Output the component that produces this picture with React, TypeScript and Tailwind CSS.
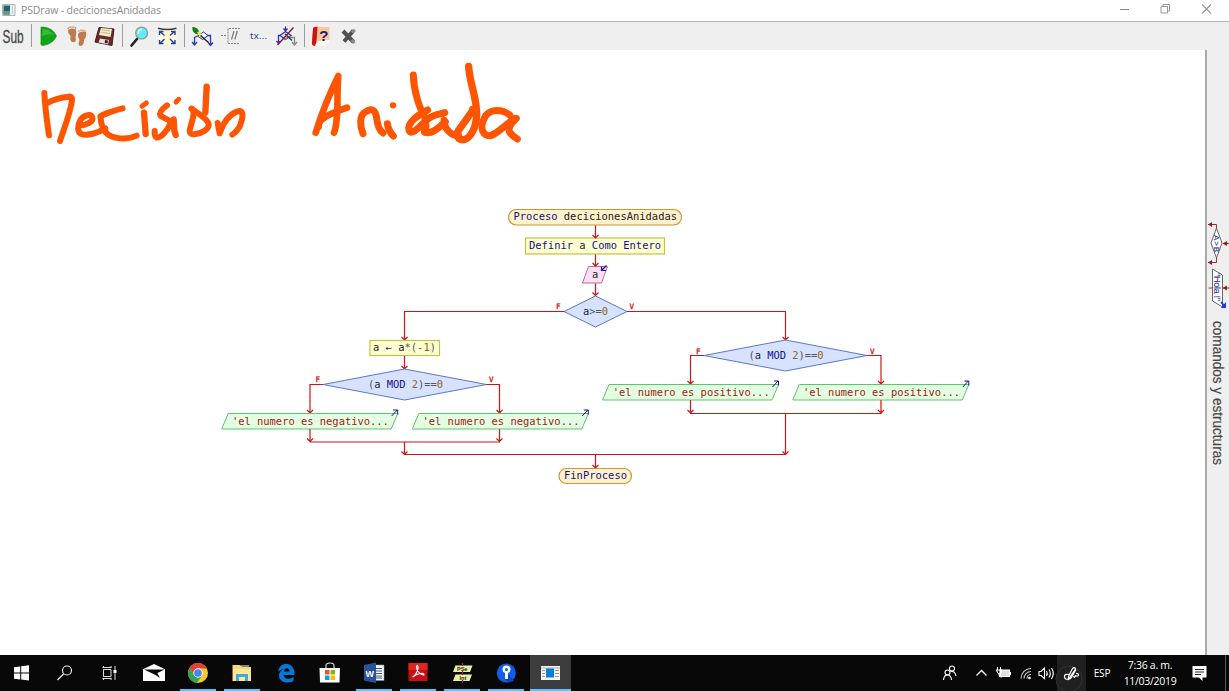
import React from "react";

type Part = [string, string];
const INK = "#11118a";
const BLK = "#222222";
const NUM = "#946520";
const OP = "#555555";
const STR = "#a81414";
const RED = "#d01414";

function Code({ x, y, w, parts }: { x: number; y: number; w: number; parts: Part[] }) {
  return (
    <text x={x} y={y} textLength={w} fontSize="10.45" xmlSpace="preserve" className="font-['DejaVu_Sans_Mono',monospace] whitespace-pre">
      {parts.map(([t, c], i) => (
        <tspan key={i} fill={c}>{t}</tspan>
      ))}
    </text>
  );
}

function Arrow({ x, y1, y2 }: { x: number; y1: number; y2: number }) {
  return <path d={`M${x} ${y1}V${y2}M${x - 3} ${y2 - 3}L${x} ${y2}L${x + 3} ${y2 - 3}`} stroke={RED} fill="none" strokeWidth="1.2" />;
}

function Output({ x, y, text }: { x: number; y: number; text: string }) {
  return (
    <g>
      <path d={`M${x + 6.5} ${y}H${x + 176}L${x + 169.5} ${y + 15.5}H${x}Z`} fill="#e3ffe3" stroke="#5fc46b" />
      <path d={`M${x + 170} ${y + 2.5}L${x + 175.5} ${y - 3.5}M${x + 171.500} ${y - 3.5}H${x + 176}V${y + 1}`} fill="none" stroke={INK} strokeWidth="1" />
      <Code x={x + 10.2} y={y + 11.2} w={157} parts={[[text, STR]]} />
    </g>
  );
}

function Flag({ x, y, t }: { x: number; y: number; t: string }) {
  return <text x={x} y={y} fontSize="7.5" fill={RED} stroke={RED} strokeWidth=".3" className="font-['DejaVu_Sans_Mono',monospace]">{t}</text>;
}

function Flowchart() {
  return (
    <g>
      <rect x="508.5" y="209.5" width="173" height="15.5" rx="7.75" fill="#fff1cc" stroke="#c9963a" strokeWidth="1.2" />
      <Code x={513.5} y={220.300} w={163.5} parts={[["Proceso", INK], [" decicionesAnidadas", BLK]]} />
      <rect x="525.5" y="238" width="139" height="16" fill="#ffffd2" stroke="#c2c244" strokeWidth="1.2" />
      <Code x={529} y={249.200} w={132} parts={[["Definir", INK], [" a ", BLK], ["Como Entero", INK]]} />
      <path d="M588.5 266.5H607.5L601.5 283H582.5Z" fill="#ffe0f2" stroke="#c4649a" />
      <path d="M606.5 265.5L601.5 270.5M601.5 266.5V270.5H606" fill="none" stroke={INK} strokeWidth="1.2" />
      <Code x={592} y={278} w={6.3} parts={[["a", BLK]]} />
      <path d="M564 311.5L595.5 296L627 311.5L595.5 327Z" fill="#d6e2ff" stroke="#5a78cc" />
      <Code x={583} y={314.5} w={25} parts={[["a", BLK], [">=", OP], ["0", NUM]]} />
      <Flag x={556} y={308.5} t="F" />
      <Flag x={629.500} y={308.5} t="V" />
      <Arrow x={595.5} y1={225.5} y2={238} />
      <Arrow x={595.5} y1={254.5} y2={266} />
      <Arrow x={595.5} y1={283.5} y2={295.5} />
      <path d="M564 311.5H404.5M627 311.5H785.5" stroke={RED} strokeWidth="1.2" fill="none" />
      <Arrow x={404.5} y1={311} y2={340} />
      <Arrow x={785.5} y1={311} y2={340} />

      <rect x="370" y="340.5" width="69.5" height="15" fill="#ffffd2" stroke="#c2c244" strokeWidth="1.2" />
      <Code x={373} y={351} w={63} parts={[["a ", BLK], ["←", INK], [" a", BLK], ["*(-", OP], ["1", NUM], [")", OP]]} />
      <Arrow x={404.5} y1={356} y2={369} />
      <path d="M323 384.5L404.5 369L486.5 384.5L404.5 400Z" fill="#d6e2ff" stroke="#5a78cc" />
      <Code x={368} y={388} w={75} parts={[["(", OP], ["a ", BLK], ["MOD", INK], [" 2", NUM], [")==", OP], ["0", NUM]]} />
      <Flag x={315.500} y={382} t="F" />
      <Flag x={489} y={382} t="V" />
      <path d="M323 384.5H310M486 384.5H499.5" stroke={RED} strokeWidth="1.2" fill="none" />
      <Arrow x={310} y1={384} y2={413} />
      <Arrow x={499.5} y1={384} y2={413} />
      <Output x={221.7} y={413.5} text="'el numero es negativo..." />
      <Output x={412.3} y={413.5} text="'el numero es negativo..." />
      <Arrow x={310} y1={429} y2={441.5} />
      <Arrow x={499.5} y1={429} y2={441.5} />
      <path d="M310 442H500" stroke={RED} strokeWidth="1.2" />
      <Arrow x={404.5} y1={442} y2={454.5} />

      <path d="M704 355.5L785.5 340L867 355.5L785.5 371Z" fill="#d6e2ff" stroke="#5a78cc" />
      <Code x={748.5} y={359} w={75} parts={[["(", OP], ["a ", BLK], ["MOD", INK], [" 2", NUM], [")==", OP], ["0", NUM]]} />
      <Flag x={696} y={353.5} t="F" />
      <Flag x={870} y={353.5} t="V" />
      <path d="M704 355.5H690.5M867 355.5H881" stroke={RED} strokeWidth="1.2" fill="none" />
      <Arrow x={690.5} y1={355} y2={384} />
      <Arrow x={881} y1={355} y2={384} />
      <Output x={602.5} y={384.5} text="'el numero es positivo..." />
      <Output x={792.8} y={384.5} text="'el numero es positivo..." />
      <Arrow x={690.5} y1={400} y2={413} />
      <Arrow x={881} y1={400} y2={413} />
      <path d="M690 413.5H881.5" stroke={RED} strokeWidth="1.2" />
      <Arrow x={785.5} y1={413} y2={454.5} />
      <path d="M404 454.5H786" stroke={RED} strokeWidth="1.2" />
      <Arrow x={595.5} y1={454} y2={468} />
      <rect x="559" y="468.5" width="72.5" height="15" rx="7.5" fill="#fff1cc" stroke="#c9963a" strokeWidth="1.2" />
      <Code x={564} y={479.3} w={63} parts={[["FinProceso", INK]]} />
    </g>
  );
}

function Handwriting() {
  return (
    <g fill="none" stroke="#ff5500" strokeLinecap="round" strokeLinejoin="round" strokeWidth="18">
      <g transform="translate(30 55) scale(.33333)">
        <path d="M43 114C45 155 51 200 57 241" />
        <path d="M54 143C70 134 94 127 116 125Q125 123 126 131C126 160 102 220 90 258" />
        <path d="M150 211C166 211 191 201 187 188C184 176 163 178 152 194C141 211 142 232 154 237C172 243 204 235 226 220" />
        <path d="M278 160C256 165 221 177 211 184C213 203 216 221 227 232C246 254 293 255 320 242" />
        <path d="M342 173L347 237" strokeWidth="19" />
        <path d="M336 154L349 144" strokeWidth="15" />
        <path d="M411 151C399 160 386 172 391 181C400 193 424 190 420 207C415 224 391 251 379 247Q373 245 374 228" />
        <path d="M431 193L433 226L437 240" strokeWidth="19" />
        <path d="M438 141L446 133" strokeWidth="15" />
        <path d="M530 95L526 173" strokeWidth="19" />
        <path d="M484 161C492 165 492 172 489 188L480 222Q476 239 493 238C516 236 538 222 536 207C532 190 504 177 486 161" />
        <path d="M563 204L569 235C578 205 598 178 622 169C640 165 640 182 634 200C630 219 617 232 607 239" />
      </g>
      <g transform="translate(290 55) scale(.33333)">
        <path d="M77 233C94 178 121 112 145 63C139 116 148 198 132 233M86 215C82 190 126 174 171 158" strokeWidth="20" />
        <path d="M219 236C209 212 210 184 221 175C242 158 254 161 259 184Q264 225 279 234" strokeWidth="21" />
        <path d="M292 206Q296 230 310 243" strokeWidth="21" />
        <path d="M309 151H309.1" strokeWidth="19" />
        <path d="M370 60C371 106 387 156 403 184Q412 215 404 232" strokeWidth="21" />
        <path d="M413 165C384 179 350 204 357 226C365 247 398 203 415 191C433 178 450 178 464 173M410 190C400 215 397 232 414 233C436 233 453 211 466 200M462 196C463 228 493 246 505 239" strokeWidth="21" />
        <path d="M536 34C538 83 562 130 560 181C558 219 542 249 522 254C503 256 496 239 506 226C519 205 548 171 548 163" strokeWidth="22" />
        <path d="M659 180C637 162 603 162 587 182C575 203 570 227 587 239C605 252 632 222 651 208C663 199 671 188 679 190C662 206 651 220 660 233Q668 244 682 252" strokeWidth="21" />
      </g>
    </g>
  );
}

function Slot({ x, y, w, h, children }: { x: number; y: number; w: number; h: number; children?: React.ReactNode }) {
  return <svg className="block shrink-0 overflow-visible" width={w} height={h} viewBox={`${x} ${y} ${w} ${h}`} fill="none">{children}</svg>;
}

function Separator() {
  return <div className="mt-[2px] h-[23px] w-px shrink-0 bg-[#9c9c9c]" />;
}

function Toolbar() {
  return (
    <div className="flex h-[29px] w-full shrink-0 border-t border-[#b9b9b9] bg-[#efefef]">
      <Slot x={0} y={22} w={31} h={28}>
        <text transform="translate(2.500 43) scale(.66 1)" fontSize="18" fill="#484848" stroke="#484848" strokeWidth=".3" className="font-['Liberation_Sans',sans-serif]">Sub</text>
      </Slot>
      <Separator />
      <Slot x={32} y={22} w={90} h={28}>
        <path d="M41 28Q40 27 43 27Q53 28 56.500 36Q53 44 43 45.500Q40 45.500 41 42Z" fill="#0fa51b" stroke="#0d8b15" strokeWidth=".7" />
        <path d="M43 29Q49 29 54 35Q48 33 42 36Z" fill="#3dbb38" />
        <g fill="#bd7b50">
          <path d="M68 30Q70 27.500 75.500 29Q77 32 75.500 37Q77 43 73 42Q69.500 42 70.500 36Q67.500 33 68 30Z" />
          <path d="M78 34Q80 30.500 86 32Q87 36 84 40Q84 46 80 46Q77.500 45 79.500 40Q77.500 37 78 34Z" />
          <path d="M67.700 28.200h1.200M69.500 27.300h1.200M71.500 27h1M73.500 27.200h1M75 28h1M78.500 31h1M80.500 30.300h1M82.500 30.200h1M84.500 30.800h1" stroke="#bd7b50" strokeWidth="1.500" />
        </g>
        <path d="M99 27.500L114 29L112 45.500L95 42Z" fill="#6b2926" stroke="#401f1f" />
        <path d="M101 28L112 29L110.500 37L99 35Z" fill="#f7f0c8" />
        <path d="M102 30L110.500 31M101.500 32.500L110 33.500" stroke="#a89c79" strokeWidth=".7" />
        <path d="M100 38.500L109 40L108 44.500L98.500 42.500Z" fill="#e4e1e1" />
        <path d="M105 40L108 40.500L107.500 43.500L104.700 43Z" fill="#422" />
      </Slot>
      <Separator />
      <Slot x={123} y={22} w={61} h={28}>
        <path d="M137 39L131.500 45.500" stroke="#202525" strokeWidth="2.700" strokeLinecap="round" />
        <circle cx="141.600" cy="33" r="5.900" fill="#62edf4" stroke="#8a9da1" strokeWidth="1.400" />
        <path d="M138.500 34Q137.500 29.800 142 29.500" stroke="#d9ffff" strokeWidth="1.800" />
        <path d="M158 28Q167.500 31 176.500 28V44Q167 46 158 44Z" fill="#fffbd0" />
        <path d="M158 28.300Q167.500 30.700 176.500 28.300" stroke="#3a3a2e" strokeWidth="1.500" />
        <path d="M164.500 35.500L160 31.500M159.500 35V31.500H163.500M170 35.500L174.500 31.500M171 31.500H175V35M164.500 39L160 43.500M159.500 40V43.500H163.500M170 39L174.500 43.500M171 43.500H175V40" stroke="#2339b5" strokeWidth="1.400" />
      </Slot>
      <Separator />
      <Slot x={185} y={22} w={119} h={28}>
        <path d="M194.500 37V44M192 42L194.500 45L197 42M194.500 37.500L197.500 36M206 35.500H210.500V45M208 42.500L210.500 45.500L213 42.500" stroke="#2a35b0" strokeWidth="1.300" />
        <path d="M197.500 36L203.500 32L208 35.500L202.500 39.500Z" fill="#f2f2f8" stroke="#2a35b0" />
        <path d="M192.300 27Q197 27 199 31L198 34.500Q192 33.500 192.300 27Z" fill="#128018" />
        <path d="M197 32.500L199.500 31L202 34.500L200 36.500Z" fill="#eee34a" />
        <path d="M200.500 35.500L208.500 42.500" stroke="#222" strokeWidth="1.500" />
        <path d="M221 35.500H227M240 28.500H228V43.500H240" stroke="#808080" strokeDasharray="2 1" />
        <path d="M231.500 39.500L234 31M234.800 39.500L237.300 31" stroke="#777" strokeWidth="1.200" />
        <text x="250" y="39" fontSize="9.500" textLength="17" fill="#36369c" className="font-['Noto_Sans',sans-serif]">tx...</text>
        <path d="M285.500 26.500V30M283.500 28.500L285.500 31L287.500 28.500M280 35.500L285.500 31.500L291 35.500L285.500 39.500ZM280 35.500H278.500V43M276.500 41L278.500 43.500L280.500 41" stroke="#2a35b0" strokeWidth="1.300" />
        <path d="M285 39.500L288 37L292 37.500H294.500V44.500M292 42L294.500 45L297 42" stroke="#858585" strokeWidth="1.300" />
        <path d="M285 34L292 40.500" stroke="#333" strokeWidth="1.400" />
        <path d="M277.500 45L293.500 27.500" stroke="#8c1c26" strokeWidth="1.400" />
      </Slot>
      <Separator />
      <Slot x={305} y={22} w={60} h={28}>
        <path d="M313 28Q315 26 319 27V41L315 46Q311 46 312 41Z" fill="#c51714" />
        <path d="M317 41L329.500 40V42.500L326 45.500H315Z" fill="#fffaf0" />
        <path d="M317.500 27H329.500V40Q324 39 316.500 42Z" fill="#ffc596" />
        <text transform="translate(319 40.500)" fontSize="15.500" fontWeight="bold" fill="#17218b" className="font-['Liberation_Sans',sans-serif]">?</text>
        <path d="M343 31L353.500 42M353.500 30.500L344 41.500" stroke="#505050" strokeWidth="4" />
        <path d="M351.500 40L354.500 43M352 32.500L355 29.800" stroke="#8c8c8c" strokeWidth="3" />
      </Slot>
    </div>
  );
}

function SidePanel() {
  return (
    <aside className="flex w-[24px] shrink-0 flex-col border-l-2 border-[#a9a9a9] bg-[#efefef] pl-px">
      <Slot x={1208} y={50} w={21} h={271}>
        <path d="M1216.500 228L1222 243L1216.500 258L1211 243Z" fill="#fff" stroke="#666" />
        <path d="M1216.500 228V224.500H1208M1216.500 258V262.500H1208M1229 243.500H1223M1208.500 288H1212M1222.500 288H1229" stroke="#943030" />
        <path d="M1208 224.500L1212 222V227ZM1208 262.500L1212 260V265ZM1222.500 243.500L1227 241V246ZM1222.500 288L1227 285.500V290.500Z" fill="#a31515" />
        <path d="M1212.500 269L1222.500 275V307L1212.500 301Z" fill="#fff" stroke="#666" />
        <g fill="#3737a4" stroke="#3737a4" strokeWidth=".15" className="font-['Liberation_Sans',sans-serif]">
          <text transform="translate(1213.800 235) rotate(90)" fontSize="8" textLength="17">A&gt;B</text>
          <text transform="translate(1214.200 273) rotate(90)" fontSize="9.500" textLength="28">"Hola !"</text>
        </g>
        <path d="M1221 302L1224 305.500" stroke="#1d32f0" strokeWidth="1.800" /><path d="M1221 308H1226V302Z" fill="#1d32f0" />
      </Slot>
      <Slot x={1208} y={321} w={21} h={145}>
        <text transform="translate(1213.300 321) rotate(90)" fontSize="14" textLength="144" lengthAdjust="spacingAndGlyphs" fill="#464646" stroke="#464646" strokeWidth=".2" className="font-['Liberation_Sans',sans-serif]">comandos y estructuras</text>
      </Slot>
    </aside>
  );
}

function TaskSlot({ x, active, running, children }: { x: number; active?: boolean; running?: boolean; children: React.ReactNode }) {
  return (
    <div className={`flex h-9 w-11 shrink-0 flex-col items-center ${active ? "bg-[linear-gradient(90deg,transparent_2px,#3d3d3d_2px,#3d3d3d_43px,transparent_43px)]" : ""}`}>
      <Slot x={x} y={655} w={44} h={34}>{children}</Slot>
      {running && <div className={`h-[2px] bg-[#76b9ed] ${active ? "w-[41px]" : "w-9"}`} />}
    </div>
  );
}

function Taskbar() {
  return (
    <footer className="flex h-9 shrink-0 overflow-hidden bg-[#080808] font-['Open_Sans',sans-serif] text-white">
      <TaskSlot x={0}>
        <path d="M14 667.300L20.200 666.500V672.500H14ZM21.200 666.300L29 665.300V672.500H21.200ZM14 673.500H20.200V679.500L14 678.700ZM21.200 673.500H29V680.600L21.200 679.600Z" fill="#fff" />
      </TaskSlot>
      <TaskSlot x={44}>
        <circle cx="67" cy="670.500" r="4.500" stroke="#eee" strokeWidth="1.200" /><path d="M63.500 674L57.500 680" stroke="#eee" strokeWidth="1.200" />
      </TaskSlot>
      <TaskSlot x={87}>
        <path d="M102.500 669.500H110V676.500H102.500ZM102.500 666V668M110 666V668M102.500 680V678M110 680V678M101.500 667.500H110.500M101.500 678.500H110.500M114 666V680" stroke="#ddd" />
        <path d="M112.500 670H115.500V673H112.500Z" fill="#fff" />
      </TaskSlot>
      <TaskSlot x={132}>
        <path d="M143 669.300L154 664L165 669.300V681H143Z" fill="#fff" /><path d="M144 669.500H164.500L154.500 674.500Z" fill="#080808" /><path d="M154 674L160 678L157 672.500Z" fill="#080808" />
      </TaskSlot>
      <TaskSlot x={176} running>
        <circle cx="198" cy="673" r="10" fill="#f7c72e" />
        <path d="M189.300 668A10 10 0 0 1 207 668.500L198 668.500L194 675Z" fill="#db4437" />
        <path d="M189.300 668A10 10 0 0 0 197 683L202 675L194 675Z" fill="#33a455" />
        <circle cx="198" cy="673" r="4.700" fill="#fff" /><circle cx="198" cy="673" r="3.800" fill="#4285f4" />
      </TaskSlot>
      <TaskSlot x={220} running>
        <path d="M232.500 665H240L242 667H251V681H232.500Z" fill="#f8d775" /><path d="M233 669H251V681H233Z" fill="#ffe69b" />
        <path d="M236 681V674H248V681H245V677H239V681Z" fill="#38afe0" /><path d="M241 666H249" stroke="#fff" />
      </TaskSlot>
      <TaskSlot x={264}>
        <path d="M278 671.500C279 666 283 663.500 287 664C292 664.500 295 669 294.500 675H283.500C284 679 289 680 293.500 677V681C286 684.500 279 681.500 279 675.500C279 672 281.500 670 284 669C281 669.300 279.300 670.500 278 671.500ZM284 671.500H289.500C289.500 667 284.500 667.500 284 671.500Z" fill="#0878d7" fillRule="evenodd" />
      </TaskSlot>
      <TaskSlot x={308}>
        <path d="M326 669V665.500Q326 663 330 663Q334 663 334 665.500V669" stroke="#ddd" strokeWidth="1.200" />
        <path d="M319.500 668H340L339.500 682.500H320Z" fill="#fff" />
        <path d="M325 670H329.500V674.500H325Z" fill="#f25022" /><path d="M330.500 670H335V674.500H330.500Z" fill="#7fba00" /><path d="M325 675.500H329.500V680H325Z" fill="#00a4ef" /><path d="M330.500 675.500H335V680H330.500Z" fill="#ffb900" />
      </TaskSlot>
      <TaskSlot x={352} running>
        <path d="M373 665H384V680.500H373Z" fill="#fff" stroke="#6d8db9" strokeWidth=".6" />
        <path d="M376 668.500H382M376 671H382M376 673.500H382M376 676H382M376 678H382" stroke="#295397" />
        <path d="M364 665L376 662.500V683L364 680.500Z" fill="#295397" />
        <text x="365.500" y="676.500" fontSize="9.500" fontWeight="bold" fill="#fff" textLength="8.500" lengthAdjust="spacingAndGlyphs" className="font-['Liberation_Sans',sans-serif]">W</text>
      </TaskSlot>
      <TaskSlot x={396} running>
        <path d="M408.500 663H427.500V681H408.500Z" fill="#c80f16" /><path d="M408.500 663H427.500V670H408.500Z" fill="#dd2524" />
        <path d="M412.500 677C416 675 418.500 670 418 666.500Q417 664 416.500 667C417 671 420 674 423 675Q425 675 423 673.500C419 673 416 674.500 412.500 677" stroke="#fff" strokeWidth="1.100" />
      </TaskSlot>
      <TaskSlot x={440} running>
        <path d="M455.500 665.500H472.500L470 672H453ZM455.500 674.500H472L469.500 681H453Z" fill="#eaf0a6" />
        <path d="M462.500 663V666M462.500 671V675M462.500 680V683" stroke="#b71b32" strokeWidth="1.200" />
        <g fill="#252525" fontSize="5.500" fontWeight="bold" className="font-['Liberation_Sans',sans-serif]"><text x="457" y="671">PSe</text><text x="459.500" y="680">Int</text></g>
      </TaskSlot>
      <TaskSlot x={484} running>
        <circle cx="506.300" cy="673" r="9.500" fill="#135ee9" /><path d="M508 674L514 681L508 682.500L505 679Z" fill="#0a48ba" /><path d="M505 673Q502.500 672 502.500 669.500Q502.500 665.500 506.500 665.500Q510.500 665.500 510.500 669.500Q510.500 672 508 673V679H505Z" fill="#fff" /><circle cx="506.500" cy="669.500" r="1.500" fill="#135ee9" />
      </TaskSlot>
      <TaskSlot x={528} active running>
        <path d="M541 666H560V680H541Z" fill="#f6f6f6" /><path d="M541 668H560" stroke="#aaa" /><path d="M546 668.500H554V677.500H546Z" fill="#087ed5" /><path d="M542 670.500H545M542 673.500H545M542 676.500H545M555 670.500H559M555 673.500H559M555 676.500H559" stroke="#999" />
      </TaskSlot>
      <div className="flex-1" />
      <Slot x={938} y={655} w={119} h={36}>
        <g stroke="#fff" strokeWidth="1.100">
          <circle cx="947.500" cy="672.500" r="2.500" /><path d="M943.500 680Q944 675 947.500 675Q951 675 951.500 680" />
          <circle cx="952" cy="668.500" r="2.500" /><path d="M950.500 671.500Q955 670.500 956 676" />
          <path d="M976.500 675.500L981.500 670.500L986.500 675.500" strokeWidth="1.300" />
          <path d="M1000 670H1009.500V676.500H1000Z" fill="#ddd" /><path d="M1010.500 672V675M997.500 667V670M1000.500 667V670M996.500 670H1001.500V672Q999 675 997.500 672.500ZM999 674Q999 677 1002 677" />
          <path d="M1021 678.500A10 10 0 0 1 1031 668.500M1024 678.500A7 7 0 0 1 1031 671.500M1027 678.500A4 4 0 0 1 1031 674.500" stroke="#ccc" /><circle cx="1029.500" cy="678" r=".8" fill="#fff" />
          <path d="M1039 671.500H1041L1044.500 668V678.500L1041 675.500H1039ZM1046.500 671Q1048 673.500 1046.500 676M1049 669.500Q1051.500 673.500 1049 677.500M1051.500 668Q1055 673.500 1051.500 679" />
        </g>
      </Slot>
      <div className="w-[29px] bg-[#202020]">
        <Slot x={1057} y={655} w={29} h={36}>
          <circle cx="1069" cy="679" r="13" stroke="#333" />
          <path d="M1069 674.500Q1064 673.500 1064.500 677Q1065.500 680.500 1069 678.500L1075.500 669Q1074.500 666.500 1072.500 668.500L1068.500 676.500L1068.500 679.500L1071 678L1076 669.500M1073.500 676Q1074.500 679 1075.500 675.500Q1078.500 677 1078.500 674.500Q1078 673 1076 673.500" stroke="#fff" strokeWidth="1.200" />
        </Slot>
      </div>
      <div className="flex w-[32px] items-center justify-center text-[10px] tracking-[-0.200px]">ESP</div>
      <div className="flex w-[64px] flex-col items-center justify-center pb-px text-[10.500px] leading-[16px] tracking-[-0.300px]"><span>7:36 a. m.</span><span>11/03/2019</span></div>
      <Slot x={1182} y={655} w={47} h={36}>
        <path d="M1192.500 666H1206.500V677.500H1202.500V681L1199 677.500H1192.500Z" fill="#fff" /><path d="M1195 669.500H1204M1195 672H1204M1195 674.500H1201" stroke="#222" /><path d="M1225.500 655V691" stroke="#555" />
      </Slot>
    </footer>
  );
}

export default function App() {
  return (
    <div className="flex h-[691px] w-[1229px] flex-col overflow-hidden bg-white">
      <header className="flex h-[21px] shrink-0 items-center justify-between bg-white">
        <div className="flex items-center">
          <Slot x={0} y={0} w={20} h={21}>
            <path d="M2.500 4.500H15V15.500H2.500Z" fill="#edf1ef" stroke="#a9b4b5" /><path d="M3.500 5.500H10V14.500H3.500Z" fill="#286069" /><path d="M3.500 11H10V14.500H3.500Z" fill="#5e9990" /><path d="M12.500 6V14" stroke="#c4cece" />
          </Slot>
          <svg width="142" height="21" className="block font-['Open_Sans',sans-serif] text-[10.500px] text-[#8a8a8a]"><text x="1" y="14" textLength="140" fill="currentColor">PSDraw - decicionesAnidadas</text></svg>
        </div>
        <Slot x={1110} y={0} w={119} h={21}>
          <path d="M1120 9.500H1129" stroke="#888" /><path d="M1161 6.500H1167.500V13H1161ZM1163 6V4.500H1169.500V11H1168" stroke="#999" /><path d="M1202 4.500L1211 13.500M1211 4.500L1202 13.500" stroke="#999" strokeWidth="1.100" />
        </Slot>
      </header>
      <Toolbar />
      <main className="flex h-[605px] shrink-0">
        <svg className="block shrink-0 bg-white" width="1205" height="605" viewBox="0 50 1205 605">
          <Handwriting />
          <Flowchart />
        </svg>
        <SidePanel />
      </main>
      <Taskbar />
    </div>
  );
}
